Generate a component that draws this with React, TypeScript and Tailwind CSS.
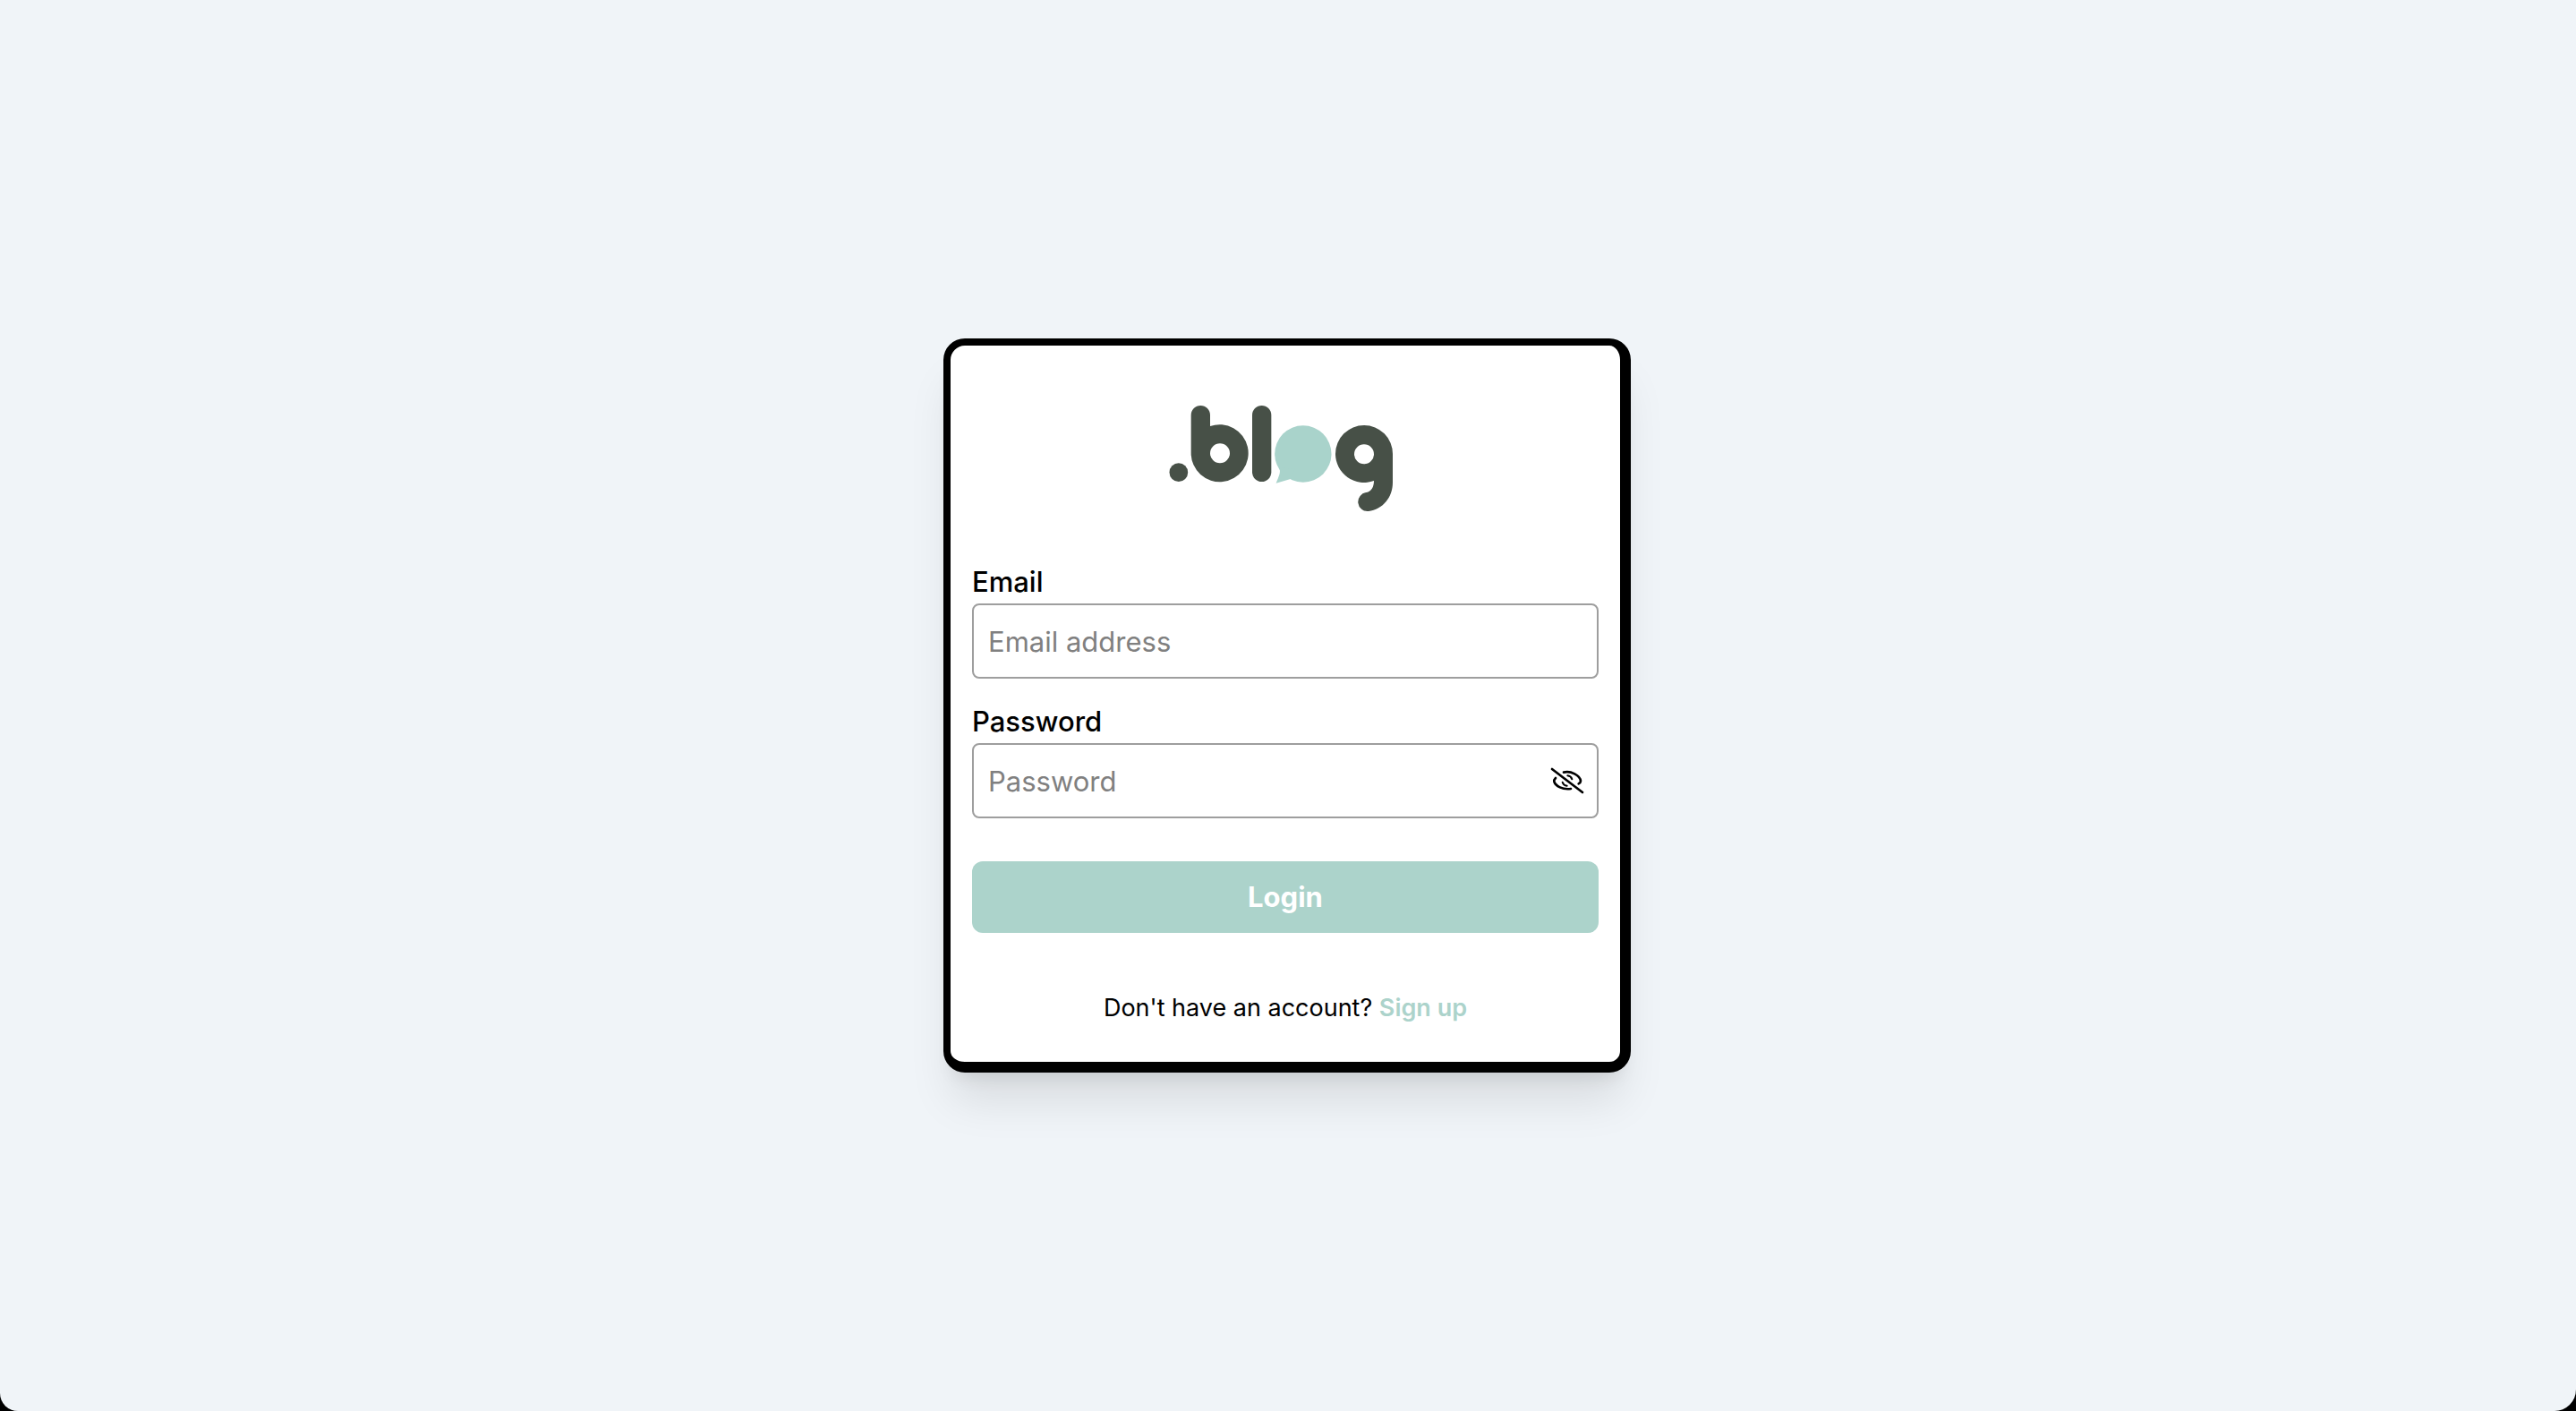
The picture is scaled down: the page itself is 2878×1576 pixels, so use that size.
import { useState } from "react";

function BlogLogo() {
  return (
    <svg viewBox="48 66 780 360" className="h-[120px] w-[260px]" role="img" aria-label=".blog">
      <g fill="#475047">
        <circle cx="80.5" cy="293" r="31" />
        <path
          fillRule="evenodd"
          d="M122 101a32 32 0 0 1 64 0V138A96 96 0 1 1 122 228ZM252 229a33 33 0 1 0-66 0a33 33 0 1 0 66 0Z"
        />
        <rect x="327" y="69" width="64" height="255" rx="32" />
        <path
          fillRule="evenodd"
          d="M606 231A96 96 0 0 1 798 231V326C798 378 764 416 717 423A31.500 31.500 0 0 1 710 360C726 357 735 342 735 321A96 96 0 0 1 606 231ZM735 232a33 33 0 1 0-66 0a33 33 0 1 0 66 0Z"
        />
      </g>
      <g fill="#a9d3cb">
        <circle cx="497.500" cy="231" r="95" />
        <path d="M417 278C424 290 417 304 407 329L458 314L470 280Z" />
      </g>
    </svg>
  );
}

function EyeOffIcon() {
  return (
    <svg
      viewBox="39 51 114 90"
      className="h-[30px] w-[38px]"
      fill="none"
      stroke="#000"
      strokeWidth="8"
      strokeLinecap="round"
      aria-hidden="true"
    >
      <path d="M45 57L147 135" />
      <path d="M84 68C108 62 139 78 141 97C141 101 138 104 134 106" />
      <path d="M57 87C53 91 51 95 52 99C57 114 80 127 108 123" />
      <path strokeWidth="6" d="M97 79C104 80 110 85 112 91" />
      <path strokeWidth="6" d="M80 101C82 108 88 112 95 113" />
    </svg>
  );
}

const labelClass = "block text-[31px] leading-[48px] font-medium";
const inputClass =
  "block h-[84px] w-full rounded-lg border-2 border-[#9e9e9e] bg-white px-4 text-[31px] text-black placeholder:text-[#808080] placeholder:opacity-100";

export default function App() {
  const [visible, setVisible] = useState(false);

  return (
    <div className="bg-black">
      <main className="flex min-h-screen items-center justify-center rounded-br-3xl rounded-bl-[20px] bg-[#f0f4f8] pr-0.5 font-['Inter',sans-serif] text-black">
        <section className="w-full max-w-3xl rounded-3xl border-t-8 border-r-12 border-b-12 border-l-8 border-black bg-white px-6 pt-[66px] pb-10 shadow-[0_40px_50px_-10px_rgba(0,0,0,0.1),0_16px_20px_-12px_rgba(0,0,0,0.1)]">
          <div className="flex justify-center">
            <BlogLogo />
          </div>
          <form className="mt-[54px]" onSubmit={(e) => e.preventDefault()}>
            <label htmlFor="email" className={labelClass}>
              Email
            </label>
            <input id="email" type="email" placeholder="Email address" className={inputClass} />
            <label htmlFor="password" className={`${labelClass} mt-6`}>
              Password
            </label>
            <div className="relative">
              <input
                id="password"
                type={visible ? "text" : "password"}
                placeholder="Password"
                className={inputClass}
              />
              <button
                type="button"
                aria-label="Toggle password visibility"
                onClick={() => setVisible(!visible)}
                className="absolute inset-y-0 right-4 flex items-center"
              >
                <EyeOffIcon />
              </button>
            </div>
            <button
              type="submit"
              className="mt-12 h-20 w-full rounded-xl bg-[#acd3cb] text-[31px] font-bold text-white"
            >
              Login
            </button>
          </form>
          <p className="mt-16 text-center text-[27px] leading-10">
            Don't have an account?{" "}
            <a href="#signup" className="font-semibold text-[#acd3cb]">
              Sign up
            </a>
          </p>
        </section>
      </main>
    </div>
  );
}
